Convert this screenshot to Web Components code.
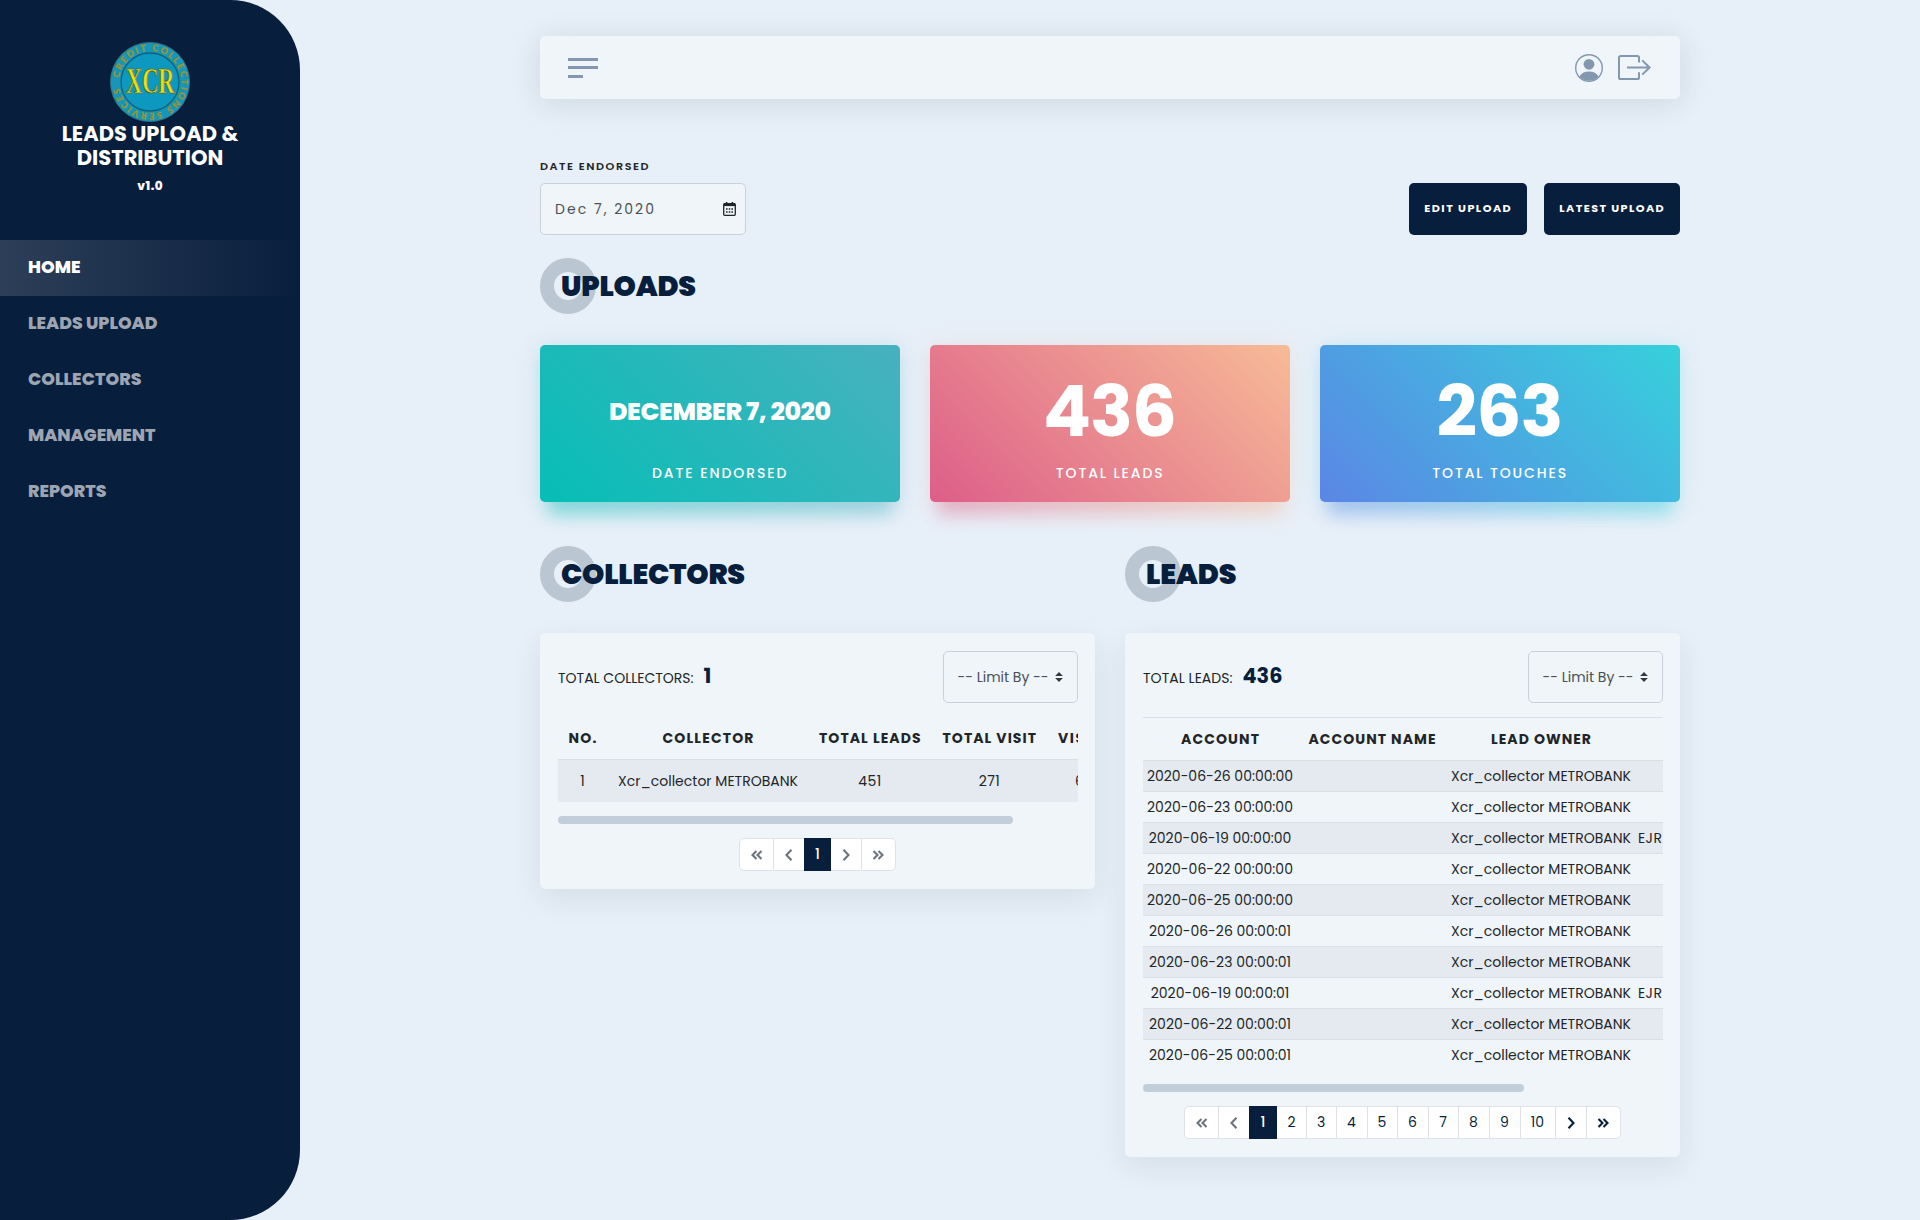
<!DOCTYPE html>
<html lang="en">
<head>
<meta charset="utf-8">
<title>Leads Upload &amp; Distribution</title>
<style>
html,body{margin:0;height:100%}
body{background:#e7eff8;font-family:Poppins,Inter,"Open Sans",sans-serif;color:#212529;overflow:hidden}
</style>
</head>
<body>
<leads-app></leads-app>
<script>
const define=(name,html,setup)=>{
  const t=document.createElement('template');t.innerHTML=html;
  customElements.define(name,class extends HTMLElement{
    connectedCallback(){
      if(this.shadowRoot)return;
      this.attachShadow({mode:'open'}).append(t.content.cloneNode(true));
      if(setup)setup(this,this.shadowRoot);
    }
  });
};

/* Text tracked to a set line width */
define('fit-text',`<style>:host{display:inline-block;white-space:pre;line-height:1}span{display:inline-block}</style><span><slot></slot></span>`,(h,r)=>{
  const s=r.querySelector('span'),w=+h.getAttribute('w'),n=h.textContent.length;
  const nat=s.getBoundingClientRect().width;
  if(n>1){const ls=(w-nat)/(n-1);s.style.letterSpacing=ls+'px';s.style.marginRight=-ls+'px';}
});

define('xcr-logo',`<style>:host{display:block;width:80px;height:80px}svg{display:block}</style>
<svg width="80" height="80" viewBox="0 0 80 80">
<defs><path id="ring" d="M8.8 39A31.2 31.2 0 1 1 8.8 41"/></defs>
<circle cx="40" cy="40" r="39.6" fill="#1596bb" stroke="#3c6f86" stroke-width=".8"/>
<circle cx="40" cy="40" r="29" fill="#0d98c0" stroke="#14607c" stroke-width="1.3"/>
<text class="ring" font-family="Lato,sans-serif" font-weight="900" font-size="9" fill="#a09c30" stroke="#7f8a3c" stroke-width=".35"><textPath href="#ring" startOffset="3">CREDIT COLLECTIONS SERVICES</textPath></text>
<text x="16" y="51.3" font-family="Liberation Serif,serif" font-size="35" font-weight="bold" textLength="48.5" lengthAdjust="spacingAndGlyphs" fill="#f0dc0c" stroke="#4e5a20" stroke-width=".7">XCR</text>
</svg>`,(h,r)=>{
  const t=r.querySelector('.ring'),n=t.textContent.length;
  t.style.letterSpacing=(187-t.getComputedTextLength())/n+'px';
});

define('nav-item',`<style>:host{display:flex;align-items:center;height:56px;padding:0 0 1px 28px;box-sizing:border-box;font-weight:800;font-size:17.4px;color:#9ca5b1}
:host([active]){color:#fff;background:linear-gradient(90deg,#2d3f58,#081e3d)}</style><slot></slot>`);

define('side-bar',`<style>:host{display:flex;flex-direction:column;width:300px;flex:none;height:1220px;background:#071e3d;border-radius:0 70px 70px 0;color:#fff;overflow:hidden}
.brand{display:flex;flex-direction:column;align-items:center;height:198px;padding-top:42px;font-weight:700;font-size:21px}
xcr-logo{margin-bottom:-1px}
.l{height:24px;display:flex;align-items:center}
.v{font-size:12px;height:20px;margin-top:7px;font-weight:800;display:flex;align-items:center}</style>
<div class="brand"><xcr-logo></xcr-logo><div class="l"><fit-text w="176.5">LEADS UPLOAD &amp;</fit-text></div><div class="l"><fit-text w="146.5">DISTRIBUTION</fit-text></div><div class="v"><fit-text w="25.5">v1.0</fit-text></div></div>
<nav-item active><fit-text w="52.5">HOME</fit-text></nav-item>
<nav-item><fit-text w="129.5">LEADS UPLOAD</fit-text></nav-item>
<nav-item><fit-text w="113.5">COLLECTORS</fit-text></nav-item>
<nav-item><fit-text w="127.5">MANAGEMENT</fit-text></nav-item>
<nav-item><fit-text w="78.5">REPORTS</fit-text></nav-item>`);

define('top-bar',`<style>:host{display:flex;justify-content:space-between;align-items:flex-start;height:63px;box-sizing:border-box;padding:18px 28px 0;background:#eff5f9;border-radius:5px;box-shadow:0 4px 30px rgba(50,80,70,.14)}
svg{display:block}.r{display:flex;gap:15px}</style>
<svg style="margin-top:4px" width="30" height="20" fill="#8497b0"><path d="M0 0h30v3H0zM0 8h30v3H0zM0 17h15v3H0z"/></svg>
<div class="r">
<svg width="28" height="28" viewBox="0 0 28 28"><circle cx="14" cy="14" r="13.3" fill="none" stroke="#8497b0" stroke-width="1.4"/><circle cx="14" cy="10.3" r="5.4" fill="#8497b0"/><path d="M4.4 22.6C6 19.2 9.5 17.4 14 17.4s8 1.8 9.6 5.2A13 13 0 0 1 14 26.8 13 13 0 0 1 4.4 22.6z" fill="#8497b0"/></svg>
<svg width="34" height="28" viewBox="0 0 34 28" fill="none" stroke="#8497b0" stroke-width="2"><path d="M21 8.5V3.6A1.6 1.6 0 0 0 19.4 2H2.6A1.6 1.6 0 0 0 1 3.6v19.8A1.6 1.6 0 0 0 2.6 25h16.8a1.6 1.6 0 0 0 1.6-1.6v-5.2M9 13.5h22.5M24.2 6.4l7.4 7.1-7.4 7.1"/></svg>
</div>`);

define('action-button',`<style>:host{display:flex;align-items:center;justify-content:center;height:52px;box-sizing:border-box;padding-right:1px;border-radius:5px;background:#071e3d;color:#fff;font-size:11.2px;font-weight:700}</style><slot></slot>`);

define('date-filter',`<style>:host{display:flex;flex-direction:column;width:206px}
.l{height:24px;display:flex;align-items:flex-start;padding-top:2px;box-sizing:border-box;font-size:11.2px;font-weight:600}
.i{display:flex;justify-content:space-between;align-items:center;height:52px;box-sizing:border-box;border:1px solid #c9d2da;border-radius:5px;background:#eff5f9;padding:0 9px 0 14px;font-size:14px;color:#495057}svg{display:block}</style>
<div class="l"><fit-text w="108.5">DATE ENDORSED</fit-text></div>
<div class="i"><fit-text w="99">Dec 7, 2020</fit-text>
<svg width="13" height="15" viewBox="0 0 13 15"><path d="M3.6 0v2M9.4 0v2" stroke="#212529" stroke-width="1.6"/><rect x=".7" y="1.7" width="11.6" height="11.6" rx="1" fill="none" stroke="#212529" stroke-width="1.3"/><path d="M.7 1.7h11.6v2.4H.7z" fill="#212529"/><path d="M3 6.2h1.6v1.5H3zM5.7 6.2h1.6v1.5H5.7zM8.4 6.2H10v1.5H8.4zM3 9.2h1.6v1.5H3zM5.7 9.2h1.6v1.5H5.7zM8.4 9.2H10v1.5H8.4z" fill="#212529"/></svg></div>`);

define('section-title',`<style>:host{display:flex;align-items:center;height:56px;font-size:28.4px;font-weight:900;color:#071e3d}
i{width:56px;height:56px;box-sizing:border-box;border:14px solid #bac6d2;border-radius:50%;margin-right:-35px;flex:none}
div{position:relative;display:flex}</style><i></i><div><slot></slot></div>`);

define('stat-card',`<style>:host{display:block;flex:1;height:157px;position:relative;z-index:0;border-radius:5px;box-shadow:0 2px 24px color-mix(in srgb,var(--b) 16%,transparent)}
.glow{position:absolute;z-index:-1;inset:12px 8px -13px;background:linear-gradient(90deg,var(--a),var(--b));filter:blur(9px);opacity:.42}
.face{display:flex;flex-direction:column;align-items:center;height:157px;border-radius:5px;color:#fff;background:linear-gradient(45deg,var(--a),var(--b))}
.v{height:109px;margin-top:11px;padding-top:1px;box-sizing:border-box;display:flex;align-items:center;font-weight:700;font-size:71px}
:host([small]) .v{font-size:25.2px;padding-top:2px;font-weight:800}
.l{font-size:14px;font-weight:500;height:16px;display:flex;align-items:center;padding-right:1.5px}</style><div class="glow"></div><div class="face"><div class="v"><slot name="value"></slot></div><div class="l"><slot></slot></div></div>`);

define('limit-select',`<style>:host{display:flex;align-items:center;justify-content:space-between;width:135px;height:52px;box-sizing:border-box;border:1px solid #c9d2da;border-radius:5px;padding:0 14px 0 13.5px;color:#495057;font-size:14px}svg{display:block}</style>
<fit-text w="91">-- Limit By --</fit-text><svg width="8" height="10" fill="#343a40"><path d="M4 0l3.9 4H.1zM4 10l3.9-4H.1z"/></svg>`);

define('page-nav',`<style>:host{display:flex;justify-content:center;height:33px;padding-right:2px}
.w{display:flex;box-sizing:border-box;border:1px solid #dee2e6;border-radius:5px;background:#fff}
.c{box-sizing:border-box;display:flex;align-items:center;justify-content:center;font-size:14px;color:#071e3d;border-left:1px solid #dee2e6}
.c:first-child,.on+.c{border-left-color:transparent}
.on{background:#071e3d;color:#fff;margin:-1px 0;border-color:#071e3d;font-weight:500}
svg{fill:none;stroke:#071e3d;stroke-width:2.1;display:block}.d svg{stroke:#6c757d}</style><div class="w"></div>`,(h,r)=>{
  const ic={'<<':'M5.5 1L1.5 5l4 4M10.5 1l-4 4 4 4','<':'M6.5 -.2L1.5 5l5 5.2','>':'M1.5 -.2L6.5 5l-5 5.2','>>':'M1.5 1l4 4-4 4M6.5 1l4 4-4 4'};
  const ws=h.getAttribute('widths').split(','),off=h.getAttribute('off').split(','),w=r.querySelector('.w');
  h.getAttribute('items').split(',').forEach((t,i)=>{
    const c=document.createElement('div');c.className='c'+(t=='1'?' on':'')+(off.includes(t)?' d':'');c.style.width=ws[i]+'px';
    if(ic[t]){const k=t.length>1?12:8;c.innerHTML=`<svg width="${k}" height="12" viewBox="0 -1 ${k} 12"><path d="${ic[t]}"/></svg>`;}
    else c.textContent=t;
    w.append(c);
  });
});

define('data-panel',`<style>:host{display:flex;flex-direction:column;width:555px;box-sizing:border-box;padding:18px 17px 18px 18px;background:#eff5f9;border-radius:5px;box-shadow:0 10px 30px rgba(30,80,80,.09)}
.h{display:flex;justify-content:space-between;height:52px}.t{display:flex;height:52px;align-items:center;font-size:14px;gap:10px;padding-top:2px;box-sizing:border-box}
::slotted([slot=count]){font-size:20.8px;font-weight:700;color:#071e3d;margin-top:-4px}</style>
<div class="h"><div class="t"><slot name="label"></slot><slot name="count"></slot></div><limit-select></limit-select></div><slot></slot>`);

define('data-table',`<style>:host{display:block;overflow:hidden}
.r{display:flex;box-sizing:border-box;width:900px;font-size:14px}
.r>div{flex:none;display:flex;align-items:center;justify-content:center;box-sizing:border-box}
.head{font-weight:700;padding-bottom:1px}
.row{border-top:1px solid #d9dfe5}
.row:nth-child(even){background:#e4eaf0}
.track{height:8px;border-radius:4px;background:#c3cedb;margin-top:14px}</style><div class="b"></div><div class="track"></div>`,(h,r)=>{
  const d=JSON.parse(h.textContent);h.textContent='';
  const b=r.querySelector('.b');
  const add=(cells,cls,ht)=>{const e=document.createElement('div');e.className='r '+cls;e.style.height=ht+'px';b.append(e);
    cells.forEach((c,i)=>{const x=document.createElement('div');x.style.width=d.cols[i]+'px';e.append(x);
      if(!c)return;
      if(c[2]){x.style.justifyContent='flex-start';x.style.paddingLeft=c[2]+'px';}
      const f=document.createElement('fit-text');f.setAttribute('w',c[1]);f.textContent=c[0];x.append(f);});return e;};
  const hd=add(d.head,'head',d.headH);if(d.line)hd.style.borderTop='1px solid #d9dfe5';
  d.rows.forEach(x=>add(x,'row',d.rowH));
  r.querySelector('.track').style.width=d.track+'px';
});

const dates=['26 00:00:00','23 00:00:00','19 00:00:00','22 00:00:00','25 00:00:00','26 00:00:01','23 00:00:01','19 00:00:01','22 00:00:01','25 00:00:01'];
const leadRows=dates.map(s=>{const o=s.startsWith('19');return [['2020-06-'+s,146-(o?3.5:0)-(s.endsWith('1')?4:0)],null,['Xcr_collector METROBANK',180],o?['EJR',24,3]:null];});
const leadData={cols:[154,150,188,100],head:[['ACCOUNT',78],['ACCOUNT NAME',127],['LEAD OWNER',100],null],headH:43,line:1,rowH:31,rows:leadRows,track:381};
const collData={cols:[49,202,121.5,117.5,130],head:[['NO.',28],['COLLECTOR',91],['TOTAL LEADS',101.5],['TOTAL VISIT',93.5],['VISIT RATE',88,10]],headH:42,rowH:43,rows:[[['1',7],['Xcr_collector METROBANK',180],['451',23],['271',21],['6%',20,27]]],track:455};

define('leads-app',`<style>:host{display:flex;height:1220px}
.wrap{flex:1;display:flex;padding-left:240px}
.main{width:1140px;padding-top:36px;display:flex;flex-direction:column}
.f{display:flex;justify-content:space-between;align-items:flex-end;margin:60px 0 23px}
.b{display:flex;gap:17px}.cards{display:flex;gap:30px;margin:31px 0 44px}
.cols{display:flex;gap:30px;align-items:flex-start}.col{display:flex;flex-direction:column;gap:31px;width:555px}
data-table,page-nav{margin-top:14px}</style>
<side-bar></side-bar>
<div class="wrap"><div class="main">
<top-bar></top-bar>
<div class="f"><date-filter></date-filter><div class="b"><action-button style="width:118px"><fit-text w="86.5">EDIT UPLOAD</fit-text></action-button><action-button style="width:136px"><fit-text w="104.5">LATEST UPLOAD</fit-text></action-button></div></div>
<section-title><fit-text w="135">UPLOADS</fit-text></section-title>
<div class="cards">
<stat-card small style="--a:#06beb6;--b:#48b1bf"><fit-text slot="value" w="222">DECEMBER 7, 2020</fit-text><fit-text w="134.5">DATE ENDORSED</fit-text></stat-card>
<stat-card style="--a:#dd5e89;--b:#f7bb97"><fit-text slot="value" w="134">436</fit-text><fit-text w="107">TOTAL LEADS</fit-text></stat-card>
<stat-card style="--a:#5b86e5;--b:#36d1dc"><fit-text slot="value" w="127">263</fit-text><fit-text w="134">TOTAL TOUCHES</fit-text></stat-card>
</div>
<div class="cols">
<div class="col"><section-title><fit-text w="184">COLLECTORS</fit-text></section-title>
<data-panel><fit-text slot="label" w="135.5">TOTAL COLLECTORS:</fit-text><fit-text slot="count" w="8">1</fit-text>
<data-table>${JSON.stringify(collData)}</data-table>
<page-nav items="&lt;&lt;,&lt;,1,&gt;,&gt;&gt;" widths="33,31,27,30,34" off="&lt;&lt;,&lt;,&gt;,&gt;&gt;"></page-nav></data-panel></div>
<div class="col"><section-title><fit-text w="90.5">LEADS</fit-text></section-title>
<data-panel><fit-text slot="label" w="89.5">TOTAL LEADS:</fit-text><fit-text slot="count" w="40">436</fit-text>
<data-table>${JSON.stringify(leadData)}</data-table>
<page-nav items="&lt;&lt;,&lt;,1,2,3,4,5,6,7,8,9,10,&gt;,&gt;&gt;" widths="33,31,28,29,30,31,30,31,30,31,31,35,31,34" off="&lt;&lt;,&lt;"></page-nav></data-panel></div>
</div>
</div></div>`);
</script>
</body>
</html>
